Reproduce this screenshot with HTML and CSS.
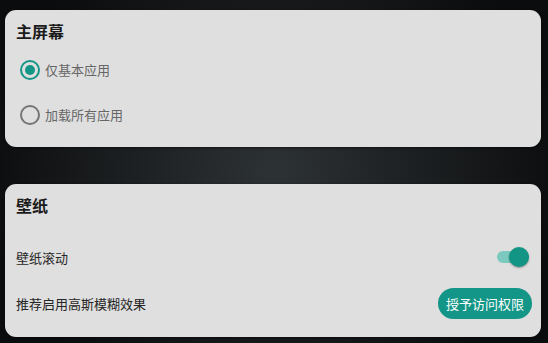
FILE: index.html
```html
<!DOCTYPE html>
<html lang="zh-CN">
<head>
<meta charset="utf-8">
<title>设置</title>
<link rel="stylesheet" href="styles.css">
</head>
<body>
<main class="page">
  <section class="card card-home">
    <h2 class="card-title">主屏幕</h2>
    <label class="radio-row">
      <span class="radio checked"><span class="dot"></span></span>
      <span class="radio-label">仅基本应用</span>
    </label>
    <label class="radio-row">
      <span class="radio"></span>
      <span class="radio-label">加载所有应用</span>
    </label>
  </section>
  <section class="card card-wall">
    <h2 class="card-title">壁纸</h2>
    <div class="pref-row first">
      <span class="pref-label">壁纸滚动</span>
      <span class="switch on"><span class="track"></span><span class="thumb"></span></span>
    </div>
    <div class="pref-row">
      <span class="pref-label">推荐启用高斯模糊效果</span>
      <button class="pill">授予访问权限</button>
    </div>
  </section>
</main>
</body>
</html>
```

FILE: styles.css
```css
* { box-sizing: border-box; }
html, body { margin: 0; height: 100%; }
body {
  width: 548px;
  height: 343px;
  overflow: hidden;
  font-family: "Noto Sans CJK SC", "Noto Sans", sans-serif;
  background:
    radial-gradient(ellipse 60% 80% at 50% 50%, #2d3234 0%, #1c1f21 45%, #0b0c0d 90%);
  background-color: #0b0c0d;
}
.page {
  display: flex;
  flex-direction: column;
  gap: 37px;
  padding: 10px 7px 0 5px;
}
.card {
  background: #dfdfdf;
  border-radius: 11px;
  box-shadow: 0 1px 3px rgba(0,0,0,0.5);
  padding: 11px 9px 0 11px;
}
.card-home { height: 137px; }
.card-wall { height: 153px; padding-top: 11px; }
.card-title {
  margin: 0;
  font-size: 16px;
  line-height: 20px;
  font-weight: 700;
  color: #1b1b1b;
}
.radio-row {
  display: flex;
  align-items: center;
  height: 45px;
}
.card-home .card-title { margin-bottom: 6px; }
.radio {
  width: 20px;
  height: 20px;
  margin-left: 4px;
  border: 2px solid #757575;
  border-radius: 50%;
  display: flex;
  align-items: center;
  justify-content: center;
  flex: none;
}
.radio.checked { border-color: #139687; }
.radio .dot {
  width: 10px;
  height: 10px;
  border-radius: 50%;
  background: #139687;
}
.radio-label {
  margin-left: 5px;
  font-size: 13px;
  color: #666;
}
.pref-row {
  display: flex;
  align-items: center;
  justify-content: space-between;
  height: 46px;
}
.pref-row.first { margin-top: 19px; }
.pref-label {
  font-size: 13px;
  color: #262626;
}
.switch {
  position: relative;
  width: 36px;
  height: 20px;
  margin-right: 3px;
}
.switch .track {
  position: absolute;
  left: 4px;
  top: 4px;
  width: 28px;
  height: 12px;
  border-radius: 6px;
  background: #7ccabf;
}
.switch .thumb {
  position: absolute;
  right: 0;
  top: 0;
  width: 20px;
  height: 20px;
  border-radius: 50%;
  background: #129585;
  box-shadow: 0 1px 2px rgba(0,0,0,0.35);
}
.pill {
  font-family: inherit;
  font-size: 13px;
  color: #fff;
  background: #139687;
  border: none;
  border-radius: 16px;
  height: 31px;
  padding: 0 8px;
  line-height: 31px;
}
```
